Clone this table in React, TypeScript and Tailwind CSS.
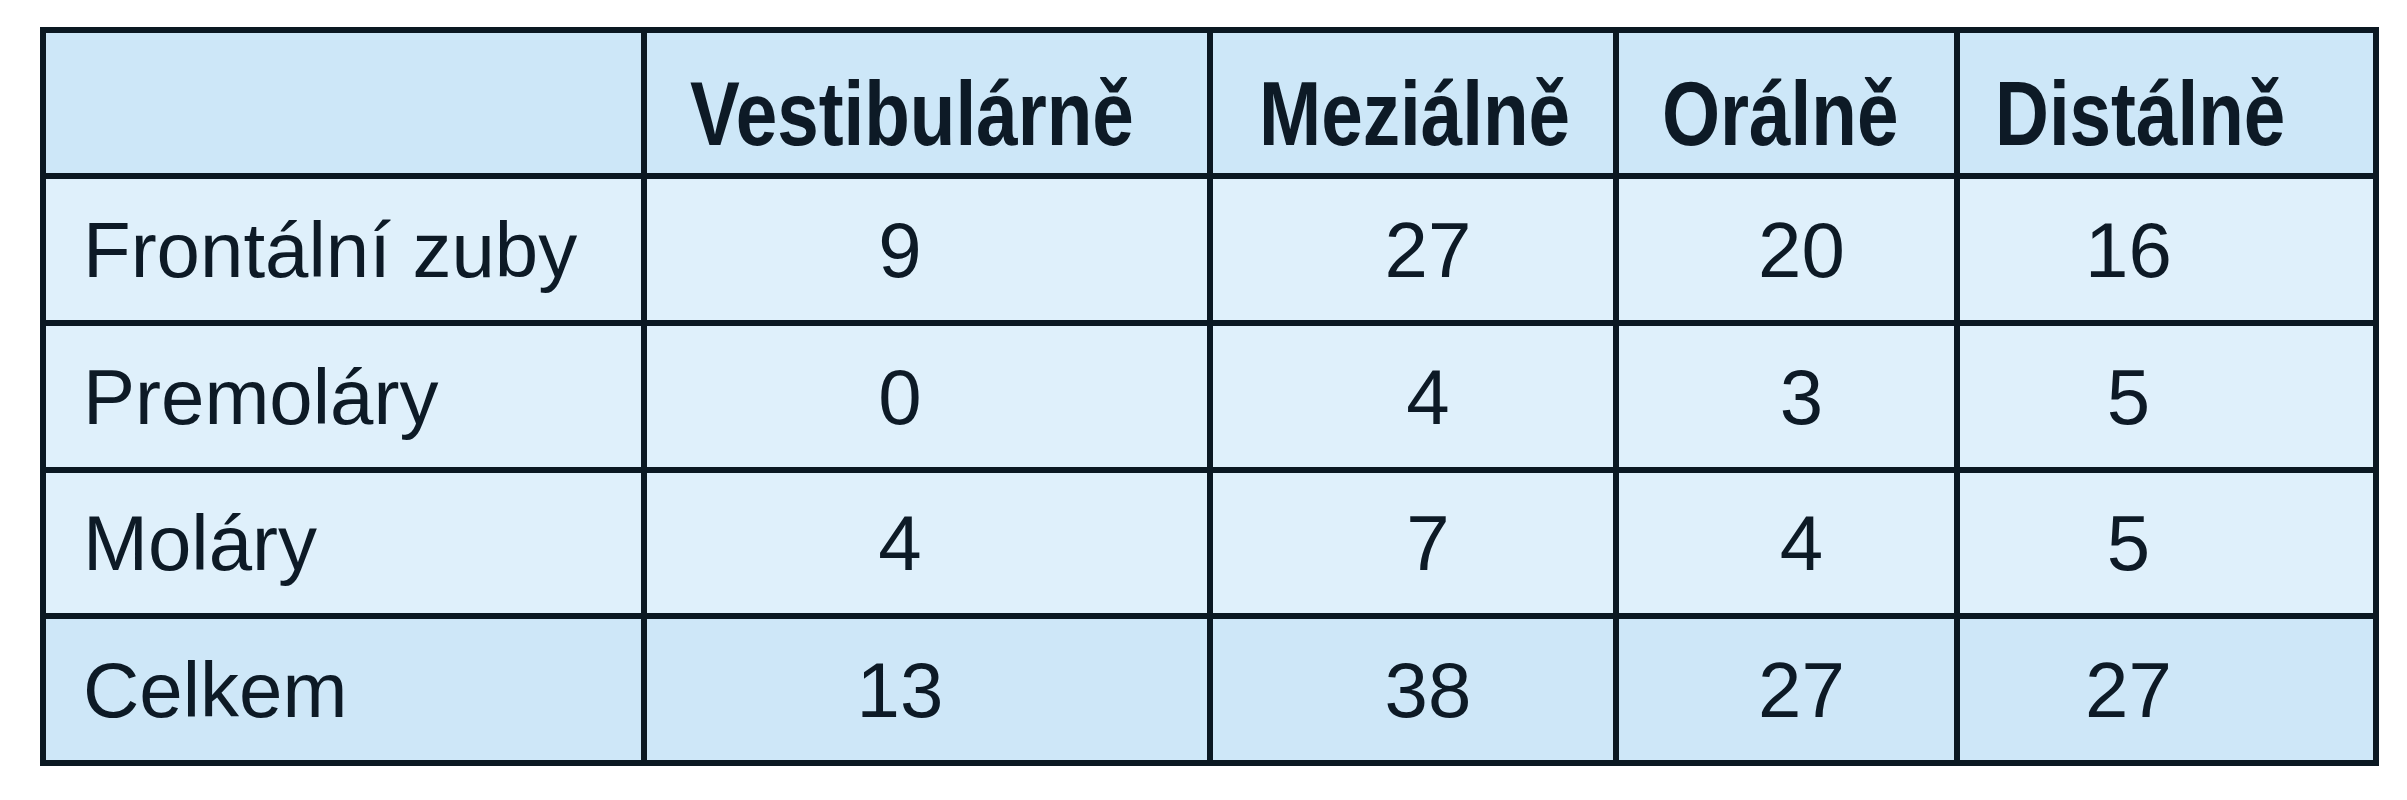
const HEADERS = [
  { label: "Vestibulárně", pad: "pl-[43px]" },
  { label: "Meziálně", pad: "pl-[46px]" },
  { label: "Orálně", pad: "pl-[43px]" },
  { label: "Distálně", pad: "pl-[35px]" },
];

// horizontal nudge per data column, so the numbers sit where they do in print
const NUM_PAD = ["pr-[54px]", "pl-[30px]", "pl-[30px]", "pr-[76px]"];

const ROWS: { label: string; values: number[]; total?: boolean }[] = [
  { label: "Frontální zuby", values: [9, 27, 20, 16] },
  { label: "Premoláry", values: [0, 4, 3, 5] },
  { label: "Moláry", values: [4, 7, 4, 5] },
  { label: "Celkem", values: [13, 38, 27, 27], total: true },
];

export default function App() {
  return (
    <div className="min-h-[800px] w-[2407px] bg-white pl-[40px] pt-[27px] text-[#0d1a26]">
      <div className="grid w-fit grid-cols-[595px_560px_400px_335px_413px] grid-rows-[140px_141px_141px_140px_141px] gap-[6px] bg-[#0b1822] p-[6px]">
        {/* header row */}
        <div className="bg-[#cde7f8]" />
        {HEADERS.map((h) => (
          <div
            key={h.label}
            className={`flex items-center overflow-hidden bg-[#cde7f8] pt-[20px] ${h.pad}`}
          >
            {/* no narrow face installed, so squeeze the bold one */}
            <span className="inline-block origin-left scale-x-[0.82] whitespace-nowrap font-['Liberation_Sans',Arial,sans-serif] text-[91px] leading-none font-bold">
              {h.label}
            </span>
          </div>
        ))}

        {ROWS.map((r) => {
          const bg = r.total ? "bg-[#cee7f8]" : "bg-[#dff0fb]";
          return [
            <div
              key={r.label}
              className={`flex items-center ${bg} pl-[37px] font-['Liberation_Sans',Arial,sans-serif] text-[78px] leading-none`}
            >
              {r.label}
            </div>,
            ...r.values.map((v, i) => (
              <div
                key={r.label + i}
                className={`flex items-center justify-center ${bg} ${NUM_PAD[i]} font-['Liberation_Sans',Arial,sans-serif] text-[78px] leading-none`}
              >
                {v}
              </div>
            )),
          ];
        })}
      </div>
    </div>
  );
}
